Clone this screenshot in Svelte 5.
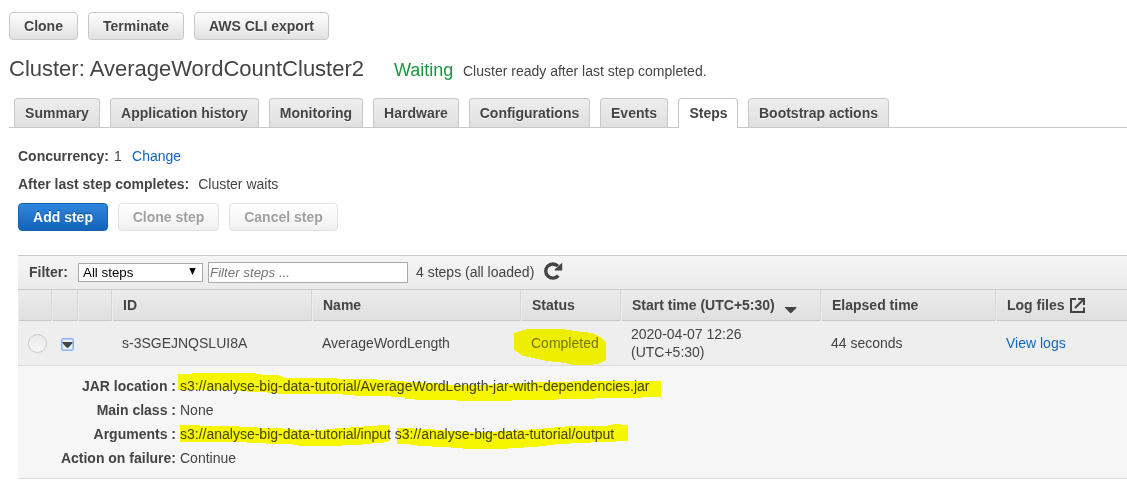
<script>
  const tabs = [
    ['Summary', 86], ['Application history', 149], ['Monitoring', 94], ['Hardware', 86],
    ['Configurations', 121], ['Events', 68], ['Steps', 60], ['Bootstrap actions', 141]
  ];
  const details = [
    ['JAR location :', 's3://analyse-big-data-tutorial/AverageWordLength-jar-with-dependencies.jar'],
    ['Main class :', 'None'],
    ['Arguments :', 's3://analyse-big-data-tutorial/input s3://analyse-big-data-tutorial/output'],
    ['Action on failure:', 'Continue']
  ];
  const marks = [
    '514,333 520,331 528,329 563,329 575,331 592,333 600,337 606,343 606,360 598,364 590,365 573,365 565,363 547,361 533,358 523,356 514,350',
    '178,374 191,374 192,373 255,373 256,374 268,375 277,375 283,377 284,378 333,378 340,379 370,379 397,381 430,383 453,385 480,385 503,384 543,382 603,381 661,381 661,397 642,397 641,398 595,398 594,399 557,399 556,400 512,400 511,401 457,401 456,400 424,400 405,399 404,397 377,396 367,396 343,395 342,394 278,394 277,393 237,391 236,390 178,390',
    '180,425 198,425 199,426 238,426 239,427 277,428 300,430 320,430 340,428 360,427 367,426 377,426 377,425 390,425 390,441 382,443 362,444 361,445 342,445 341,446 299,446 298,445 287,444 266,444 265,443 228,442 180,442',
    '397,428 430,429 450,431 483,432 510,431 537,429 572,426 603,426 613,425 613,424 621,424 621,425 628,425 628,441 603,442 578,443 547,445 546,446 517,448 508,448 507,449 463,449 462,448 439,447 410,445 409,444 397,444'
  ];
</script>

<main>
  <div class="actions">
    <button style:width="69px">Clone</button>
    <button style:width="96px">Terminate</button>
    <button style:width="135px">AWS CLI export</button>
  </div>
  <header>
    <h1>Cluster: AverageWordCountCluster2</h1>
    <span class="state">Waiting</span>
    <span class="reason">Cluster ready after last step completed.</span>
  </header>
  <nav>
    {#each tabs as [name, w]}
      <div class="tab" class:active={name === 'Steps'} style:width="{w}px">{name}</div>
    {/each}
  </nav>
  <section class="panel">
    <p class="info"><b>Concurrency:</b><span class="one">1</span><a href="#change">Change</a></p>
    <p class="info"><b>After last step completes:</b><span class="waits">Cluster waits</span></p>
    <div class="actions steps">
      <button class="primary" style:width="90px">Add step</button>
      <button class="off" style:width="101px">Clone step</button>
      <button class="off" style:width="109px">Cancel step</button>
    </div>
    <div class="filter">
      <b>Filter:</b>
      <div class="select"><span>All steps</span><svg width="7" height="7" viewBox="0 0 7 7"><path d="M0.3 0h6.4L3.5 7z" fill="#000" /></svg></div>
      <div class="input">Filter steps ...</div>
      <span class="count">4 steps (all loaded)</span>
      <svg class="refresh" width="20" height="20" viewBox="0 0 20 20"><path d="M15.3 14.6A7.1 7.1 0 1 1 15 5.2" fill="none" stroke="#444" stroke-width="3.4" /><path d="M19.2 1.8v7.6h-7.4v-1.2l2.6-2 2.2-2.2z" fill="#444" /></svg>
    </div>
    <div class="grid head">
      <div></div><div></div><div></div>
      <div>ID</div><div>Name</div><div>Status</div>
      <div>Start time (UTC+5:30)<svg class="sort" width="12" height="6" viewBox="0 0 12 6"><path d="M0 0h11.5v0.7L6.4 6H5.2L0 0.7z" fill="#444" /></svg></div>
      <div>Elapsed time</div>
      <div>Log files<svg class="ext" width="15" height="15" viewBox="0 0 15 15"><path d="M6 1H1v13h13V9.5" fill="none" stroke="#444" stroke-width="2" /><path d="M5 10L13 2M8 1h6v6" fill="none" stroke="#444" stroke-width="2" /></svg></div>
    </div>
    <div class="grid row">
      <div><i class="radio"></i></div>
      <div><i class="toggle"><svg width="11" height="6" viewBox="0 0 11 6"><path d="M0.5 0h10v1L6.3 5.8H4.7L0.5 1z" fill="#444" /></svg></i></div>
      <div></div>
      <div>s-3SGEJNQSLUI8A</div><div>AverageWordLength</div><div class="done">Completed</div>
      <div class="date">2020-04-07 12:26<br />(UTC+5:30)</div>
      <div>44 seconds</div><div><a href="#logs">View logs</a></div>
    </div>
    <dl>
      {#each details as [label, value]}
        <dt>{label}</dt><dd>{value}</dd>
      {/each}
    </dl>
  </section>
  <svg class="marker" width="1127" height="484" viewBox="0 0 1127 484">
    {#each marks as points}<polygon {points} fill="#ff0" shape-rendering="crispEdges" />{/each}
  </svg>
</main>

<style>
  :global(body) { background: #fff; overflow: hidden; }
  * { box-sizing: border-box; }
  main { position: relative; width: 1127px; height: 484px; overflow: hidden; background: #fff; padding: 12px 0 0 9px; font: 14px/18px "Liberation Sans", Arial, sans-serif; color: #444; white-space: nowrap; }
  .actions { display: flex; gap: 10px; }
  button { height: 28px; padding: 0; border: 1px solid #c8c8c8; border-radius: 4px; background: linear-gradient(#fff, #e0e0e0) border-box; color: #444; font: bold 14px/18px "Liberation Sans", Arial, sans-serif; white-space: nowrap; text-shadow: 0 1px 0 #fff; }
  button.primary { background: linear-gradient(#2f86dc, #1264b8); border-color: #1463b1; color: #fff; text-shadow: 0 -1px 0 #0a4a90; }
  button.off { color: #a0a0a0; border-color: #e1e1e1; background: linear-gradient(#fff, #f0f0f0); }
  header { display: flex; align-items: baseline; height: 58px; padding-top: 14px; }
  h1 { margin: 0; width: 385px; font-size: 22px; line-height: 30px; font-weight: normal; }
  .state { width: 69px; font-size: 18px; color: #1a9641; }
  nav { display: flex; gap: 10px; height: 30px; padding-left: 5px; border-bottom: 1px solid #c8c8c8; }
  .tab { height: 29px; border: 1px solid #c8c8c8; border-bottom: 0; border-radius: 4px 4px 0 0; background: linear-gradient(#eee, #dfdfdf); font-weight: bold; text-align: center; line-height: 29px; text-shadow: 0 1px 0 #fff; }
  .tab.active { height: 30px; background: #fff; padding-left: 1px; }
  .panel { padding: 19px 0 0 9px; }
  .info { display: flex; margin: 0 0 10px; height: 18px; }
  .one { margin-left: 5px; width: 18px; }
  .waits { margin-left: 9px; }
  a { color: #1166bb; text-decoration: none; }
  .steps { margin-bottom: 24px; }
  .filter { display: flex; align-items: center; height: 34px; border-top: 1px solid #c9c9c9; background: linear-gradient(#f5f5f5, #ebebeb); padding-left: 11px; }
  .filter b { width: 49px; margin-top: -2px; }
  .select { display: flex; align-items: center; justify-content: space-between; width: 125px; height: 19px; margin-right: 5px; padding: 0 6px 0 4px; border: 1px solid #a9a9a9; background: #fff; color: #000; font-size: 13.333px; }
  .select svg { margin-top: -2px; }
  .input { width: 200px; height: 21px; border: 1px solid #a9a9a9; background: #fff; padding-left: 1px; line-height: 19px; color: #757575; font-style: italic; font-size: 13.333px; }
  .count { width: 127px; margin: -2px 0 0 8px; }
  .refresh { margin-top: -3px; }
  .grid { display: grid; grid-template-columns: 34px 26px 34px 200px 209px 100px 200px 175px 1fr; }
  .head { height: 32px; border: solid #c8c8c8; border-width: 1px 0; background: linear-gradient(#ececec, #dfdfdf); font-weight: bold; }
  .head > div { padding-left: 11px; border-right: 1px solid #d6d6d6; box-shadow: inset 1px 0 #ededed; line-height: 31px; }
  .head > div:last-child { border-right: 0; }
  .sort { margin-left: 10px; vertical-align: -3px; }
  .ext { margin-left: 5px; vertical-align: -3px; }
  .row { height: 45px; border-bottom: 1px solid #ddd; background: #eee; align-items: center; }
  .row > div { padding-left: 10px; }
  .row > div:nth-child(2) { padding-left: 9px; }
  .row .done { color: #777; }
  .radio { display: block; width: 19px; height: 19px; margin-top: 1px; border: 1px solid #c8c8c8; border-radius: 50%; background: linear-gradient(#eaeaea, #f6f6f6); }
  .toggle { display: flex; align-items: center; justify-content: center; width: 13px; height: 13px; margin-top: 2px; border: 1px solid #8ab4f4; border-radius: 2px; box-shadow: inset 0 0 0 1px #aecbfa; background: #eee; }
  .toggle svg { flex: none; margin-top: 2px; }
  dl { display: grid; grid-template-columns: 158px 1fr; grid-auto-rows: 24px; column-gap: 4px; height: 113px; margin: 0; padding-top: 8px; line-height: 24px; background: #f6f6f6; border-bottom: 1px solid #ddd; }
  dt { font-weight: bold; text-align: right; }
  dd { margin: 0; }
  .marker { position: absolute; left: 0; top: 0; mix-blend-mode: multiply; }
</style>
